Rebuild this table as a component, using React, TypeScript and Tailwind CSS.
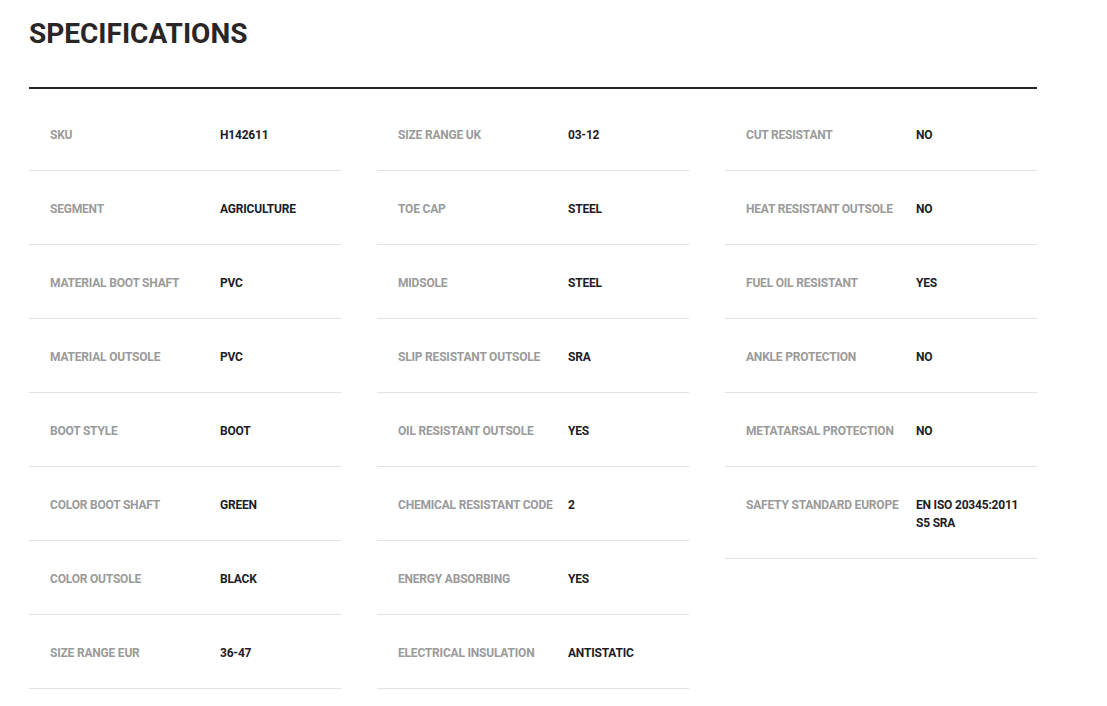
const rows: [string, string][][] = [
  [
    ["SKU", "H142611"],
    ["SEGMENT", "AGRICULTURE"],
    ["MATERIAL BOOT SHAFT", "PVC"],
    ["MATERIAL OUTSOLE", "PVC"],
    ["BOOT STYLE", "BOOT"],
    ["COLOR BOOT SHAFT", "GREEN"],
    ["COLOR OUTSOLE", "BLACK"],
    ["SIZE RANGE EUR", "36-47"],
  ],
  [
    ["SIZE RANGE UK", "03-12"],
    ["TOE CAP", "STEEL"],
    ["MIDSOLE", "STEEL"],
    ["SLIP RESISTANT OUTSOLE", "SRA"],
    ["OIL RESISTANT OUTSOLE", "YES"],
    ["CHEMICAL RESISTANT CODE", "2"],
    ["ENERGY ABSORBING", "YES"],
    ["ELECTRICAL INSULATION", "ANTISTATIC"],
  ],
  [
    ["CUT RESISTANT", "NO"],
    ["HEAT RESISTANT OUTSOLE", "NO"],
    ["FUEL OIL RESISTANT", "YES"],
    ["ANKLE PROTECTION", "NO"],
    ["METATARSAL PROTECTION", "NO"],
    ["SAFETY STANDARD EUROPE", "EN ISO 20345:2011\nS5 SRA"],
  ],
];

export default function App() {
  return (
    <div className="min-h-screen bg-white px-[29px] pt-[18px] font-['Roboto','Liberation_Sans',sans-serif]">
      <div className="w-[1008px]">
        <h2 className="text-[28px] leading-[32px] font-bold tracking-[0px] text-[#2a2527]">
          SPECIFICATIONS
        </h2>
        <div className="mt-[37px] h-[2px] bg-[#24242c]" />
        <div className="mt-[8px] grid grid-cols-3 gap-x-[36px] items-start">
          {rows.map((col, ci) => (
            <div key={ci} className="flex flex-col">
              {col.map(([label, value]) => (
                <div
                  key={label}
                  className="flex border-b border-[#e2e2e2] pl-[21px] pr-[20px] pt-[29px] pb-[26px]"
                >
                  <div className="w-[170px] shrink-0 whitespace-nowrap text-[12px] leading-[18px] font-bold tracking-[-0.2px] text-[#9a9a9a]">
                    {label}
                  </div>
                  <div className="whitespace-pre text-[12px] leading-[18px] font-bold tracking-[-0.2px] text-[#1c1c28]">
                    {value}
                  </div>
                </div>
              ))}
            </div>
          ))}
        </div>
      </div>
    </div>
  );
}
